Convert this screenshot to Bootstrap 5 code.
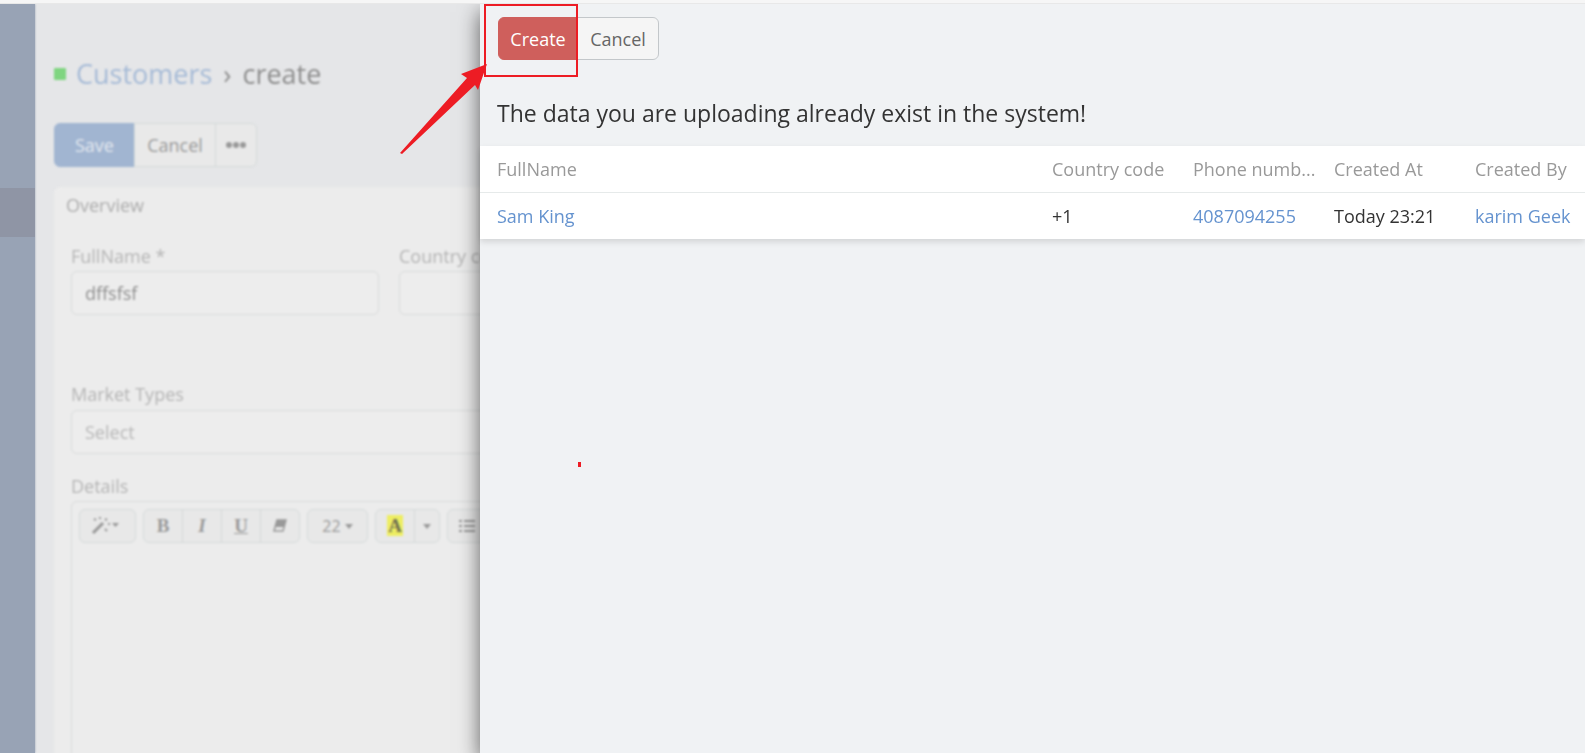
<!DOCTYPE html>
<html lang="en">
<head>
<meta charset="utf-8">
<meta name="viewport" content="width=device-width, initial-scale=1">
<title>Customers › create</title>
<link href="https://cdn.jsdelivr.net/npm/bootstrap@5.3.0/dist/css/bootstrap.min.css" rel="stylesheet">
<style>
body{font-family:"Open Sans","Noto Sans",sans-serif;font-size:18px;line-height:24px;color:#333;background:#f0f2f4}
.top-strip{height:4px;background:#f6f6f6;border-bottom:1px solid #e8e8e8}
a{text-decoration:none}
/* dimmed page behind the drawer */
.backdrop-page{width:480px;background:#e5e6e8}
.page-inner{width:760px}
.side{width:35px;background:#98a3b5;padding-top:184px;box-shadow:0 0 2px #98a3b5}
.side a{display:block;height:49px;background:#8f95a5}
.content{padding:54px 0 0 19px;margin-bottom:-20px;filter:blur(1px)}
.title{font-size:27px;line-height:32px;color:#8d8d8d;margin-bottom:33px;gap:11px}
.title a{color:#a5bad6;margin-left:-1px}
.status{width:12px;height:12px;background:#7fd580;border-radius:1px}
.btn{--bs-btn-font-size:18px;--bs-btn-line-height:24px;--bs-btn-border-radius:6px;height:44px;padding:0;width:82px}
.dim .btn{color:#999;background:#e9e9e9;border-color:#d5dada}
.dim .btn.save{color:#e3e8ef;background:#a1b5d1;border-color:#a1b5d1;width:81px}
.dim .btn.dots{width:42px}
.panel{background:#ececec;border-radius:6px 0 0 0;margin-top:20px;padding:6px 0 0 17px}
.panel h2{font-size:18px;line-height:24px;color:#acacac;margin:0 0 0 -5px}
.fields{gap:20px;margin:27px 0 67px}
.field-box{width:308px}
.panel label{color:#b4b4b4;display:block;margin-bottom:3px}
.panel .form-control,.panel .form-select{height:44px;font-size:18px;line-height:24px;padding:0 13px;border:1px solid #d9dbdb;border-radius:6px;background:#ededed;color:#8e8e8e}
.panel .select-label{margin-bottom:4px}
.panel .form-select{color:#b7b7b7;margin-bottom:20px}
.editor{border:1px solid #d9dbdb;border-radius:6px 0 0 0}
.tools{padding:7px;gap:7px}
.tools .btn{height:34px;width:40px;font-size:16px;color:#999;background:#e8e8e8;border-color:#d5dada}
.tools .serif{font-family:"Liberation Serif",serif;font-size:19px;line-height:20px}
.tools .wide{width:57px}
.tools .size{width:61px}
.tools .slim{width:26px}
.tools .hl{background:#eeee62;color:#707050;padding:0 1px}
.editor textarea.form-control{border:0;background:transparent;resize:none}
/* drawer */
.drawer{background:#f0f2f4;z-index:2;box-shadow:0 8px 20px rgba(0,0,0,.6);min-width:0}
.actions{padding:13px 18px 0}
.actions .btn{height:43px;line-height:22px}
.btn.create{color:#fff;background:#cf5f5c;border-color:#cf5f5c;width:80px}
.btn.cancel{color:#666;background:#f5f5f5;border-color:#c3c7ca}
.drawer h1{font-size:23px;line-height:32px;font-weight:400;color:#333;margin:37px 17px 17px}
.results{table-layout:fixed;box-shadow:0 3px 6px rgba(0,0,0,.12);background:#fff;margin:0}
.results th,.results td{font-weight:400;height:47px;padding:0 0 0 18px;vertical-align:middle;border:0;color:#333;background:#fff}
.results th{height:46px;color:#999;border-bottom:1px solid #e6eaea}
.results th:first-child,.results td:first-child{padding-left:17px}
.results a{color:#6593cf}
.results col.data{width:141px}
.results col.last{width:128px}
/* callout marks */
.mark-box{position:absolute;left:4px;top:0;width:94px;height:73px;border:2px solid #ed1c24}
.mark-arrow{position:absolute;left:-80px;top:59px}
.mark-dot{position:absolute;left:98px;top:458px;width:3px;height:5px;background:#ed1c24}
</style>
</head>
<body>
<div class="vh-100 d-flex flex-column overflow-hidden">
<div class="top-strip flex-shrink-0"></div>
<div class="d-flex flex-grow-1 overflow-hidden">
  <div class="backdrop-page dim flex-shrink-0 overflow-hidden d-flex">
    <div class="page-inner d-flex flex-shrink-0">
    <nav class="side flex-shrink-0"><a href="#" aria-label="Customers"></a></nav>
    <main class="content flex-grow-1 d-flex flex-column">
      <div class="title d-flex align-items-center"><span class="status"></span><a href="#">Customers</a><span>›</span><span>create</span></div>
      <div class="btn-group align-self-start">
        <button type="button" class="btn save">Save</button>
        <button type="button" class="btn">Cancel</button>
        <button type="button" class="btn dots" aria-label="More"><svg width="20" height="6" viewBox="0 0 20 6" fill="currentColor" class="d-block mx-auto"><circle cx="3" cy="3" r="3"/><circle cx="10" cy="3" r="3"/><circle cx="17" cy="3" r="3"/></svg></button>
      </div>
      <section class="panel flex-grow-1 d-flex flex-column">
        <h2>Overview</h2>
        <div class="fields d-flex">
          <div class="field-box"><label for="fn">FullName *</label><input id="fn" class="form-control" value="dffsfsf"></div>
          <div class="field-box"><label for="cc">Country code</label><input id="cc" class="form-control"></div>
        </div>
        <label for="mt" class="select-label">Market Types</label>
        <select id="mt" class="form-select"><option>Select</option></select>
        <label for="dt">Details</label>
        <div class="editor flex-grow-1">
          <div class="tools d-flex">
            <button type="button" class="btn wide d-flex align-items-center justify-content-center" aria-label="Style"><svg width="34" height="20" viewBox="0 0 34 20"><path d="M2 17 12 7" stroke="currentColor" stroke-width="3"/><path d="M3 3l2 1M9 1v2M16 3l-2 1M17 8h2M14 13l2 2" stroke="currentColor" stroke-width="2"/><path d="M21 7h7l-3.500 4z" fill="currentColor"/></svg></button>
            <div class="btn-group">
              <button type="button" class="btn serif fw-bold">B</button>
              <button type="button" class="btn serif fw-bold fst-italic">I</button>
              <button type="button" class="btn serif fw-bold text-decoration-underline">U</button>
              <button type="button" class="btn" aria-label="Clear formatting"><svg width="14" height="14" viewBox="0 0 14 14" class="d-block mx-auto"><path d="M4 1h9l-3 11H1z" fill="none" stroke="currentColor" stroke-width="1.500"/><path d="M4 1h9l-2 7H2z" fill="currentColor"/></svg></button>
            </div>
            <button type="button" class="btn size d-flex align-items-center justify-content-center gap-1">22 <svg width="8" height="5" viewBox="0 0 8 5"><path d="M0 0h8L4 5z" fill="currentColor"/></svg></button>
            <div class="btn-group">
              <button type="button" class="btn serif fw-bold"><span class="hl">A</span></button>
              <button type="button" class="btn slim" aria-label="Text color"><svg width="8" height="5" viewBox="0 0 8 5" class="d-block mx-auto"><path d="M0 0h8L4 5z" fill="currentColor"/></svg></button>
            </div>
            <button type="button" class="btn" aria-label="List"><svg width="16" height="12" viewBox="0 0 16 12" class="d-block mx-auto"><path d="M0 1h3M5 1h11M0 6h3M5 6h11M0 11h3M5 11h11" stroke="currentColor" stroke-width="2"/></svg></button>
          </div>
          <textarea id="dt" class="form-control"></textarea>
        </div>
      </section>
    </main>
    </div>
  </div>
  <aside class="drawer flex-grow-1 position-relative">
    <div class="actions"><div class="btn-group">
      <button type="button" class="btn create">Create</button>
      <button type="button" class="btn cancel">Cancel</button>
    </div></div>
    <h1>The data you are uploading already exist in the system!</h1>
    <table class="table results">
      <colgroup><col><col class="data"><col class="data"><col class="data"><col class="last"></colgroup>
      <thead><tr><th>FullName</th><th>Country code</th><th>Phone numb...</th><th>Created At</th><th>Created By</th></tr></thead>
      <tbody><tr><td><a href="#">Sam King</a></td><td>+1</td><td><a href="#">4087094255</a></td><td>Today 23:21</td><td><a href="#">karim Geek</a></td></tr></tbody>
    </table>
    <div class="mark-box"></div>
    <svg class="mark-arrow" width="88" height="92" viewBox="0 0 88 92"><path d="M87 1 61 11l6 4L0 90l2 1L75 22l3 5z" fill="#ed1c24"/></svg>
    <div class="mark-dot"></div>
  </aside>
</div>
</div>
<script src="https://cdn.jsdelivr.net/npm/bootstrap@5.3.0/dist/js/bootstrap.bundle.min.js"></script>
</body>
</html>
